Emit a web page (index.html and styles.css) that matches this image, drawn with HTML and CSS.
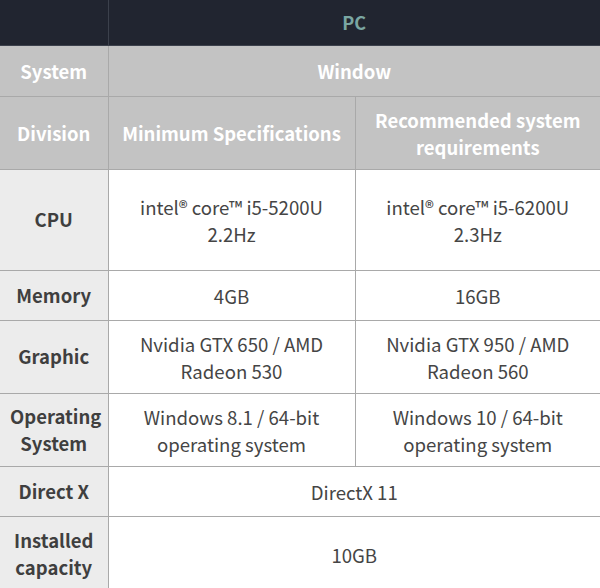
FILE: index.html
```html
<!DOCTYPE html>
<html>
<head>
<meta charset="utf-8">
<link rel="stylesheet" href="styles.css">
</head>
<body>
<table class="spec">
  <colgroup>
    <col class="c1">
    <col class="c2">
    <col class="c3">
  </colgroup>
  <tr class="r-top">
    <th class="dark"></th>
    <th class="dark pc" colspan="2">PC</th>
  </tr>
  <tr class="r-sys">
    <th class="gh">System</th>
    <th class="gh" colspan="2">Window</th>
  </tr>
  <tr class="r-div">
    <th class="gh">Division</th>
    <th class="gh">Minimum Specifications</th>
    <th class="gh">Recommended system requirements</th>
  </tr>
  <tr class="r-cpu">
    <th class="lb">CPU</th>
    <td>intel® core™ i5-5200U<br>2.2Hz</td>
    <td>intel® core™ i5-6200U<br>2.3Hz</td>
  </tr>
  <tr class="r-one">
    <th class="lb">Memory</th>
    <td>4GB</td>
    <td>16GB</td>
  </tr>
  <tr class="r-two">
    <th class="lb">Graphic</th>
    <td>Nvidia GTX 650 / AMD<br>Radeon 530</td>
    <td>Nvidia GTX 950 / AMD<br>Radeon 560</td>
  </tr>
  <tr class="r-two">
    <th class="lb">Operating System</th>
    <td>Windows 8.1 / 64-bit<br>operating system</td>
    <td>Windows 10 / 64-bit<br>operating system</td>
  </tr>
  <tr class="r-one">
    <th class="lb">Direct X</th>
    <td colspan="2">DirectX 11</td>
  </tr>
  <tr class="r-last">
    <th class="lb">Installed capacity</th>
    <td colspan="2">10GB</td>
  </tr>
</table>
</body>
</html>
```

FILE: styles.css
```css
html, body {
  margin: 0;
  padding: 0;
  background: #ffffff;
}
body {
  font-family: "Noto Sans CJK KR", "Noto Sans", sans-serif;
  font-size: 18.6px;
  line-height: 27px;
  color: #454545;
  overflow: hidden;
}
.spec {
  width: 600px;
  border-collapse: collapse;
  table-layout: fixed;
}
.c1 { width: 108px; }
.c2 { width: 247px; }
.c3 { width: 245px; }
.spec th, .spec td {
  border: 1px solid #a9a9a9;
  text-align: center;
  vertical-align: middle;
  padding: 0 10px;
}
.spec tr > :first-child { border-left: none; }
.spec tr > :last-child { border-right: none; }
.spec .dark {
  background: #212530;
  border-color: #3c414c;
  border-top: none;
}
.pc {
  color: #7aa6a2;
  font-weight: 700;
  font-size: 18px;
}
.spec .gh {
  background: #c3c3c3;
  color: #ffffff;
  font-weight: 700;
  font-size: 18.5px;
  padding-top: 2px;
}
.lb {
  background: #ececec;
  color: #3f3f3f;
  font-weight: 700;
  font-size: 18.5px;
  padding: 0 4px;
}
.spec td {
  background: #ffffff;
  font-weight: 400;
}
.r-top { height: 45px; }
.r-sys { height: 51px; }
.r-div { height: 73px; }
.r-cpu { height: 101px; }
.r-one { height: 50px; }
.r-two { height: 73px; }
.r-last { height: 76px; }
```
